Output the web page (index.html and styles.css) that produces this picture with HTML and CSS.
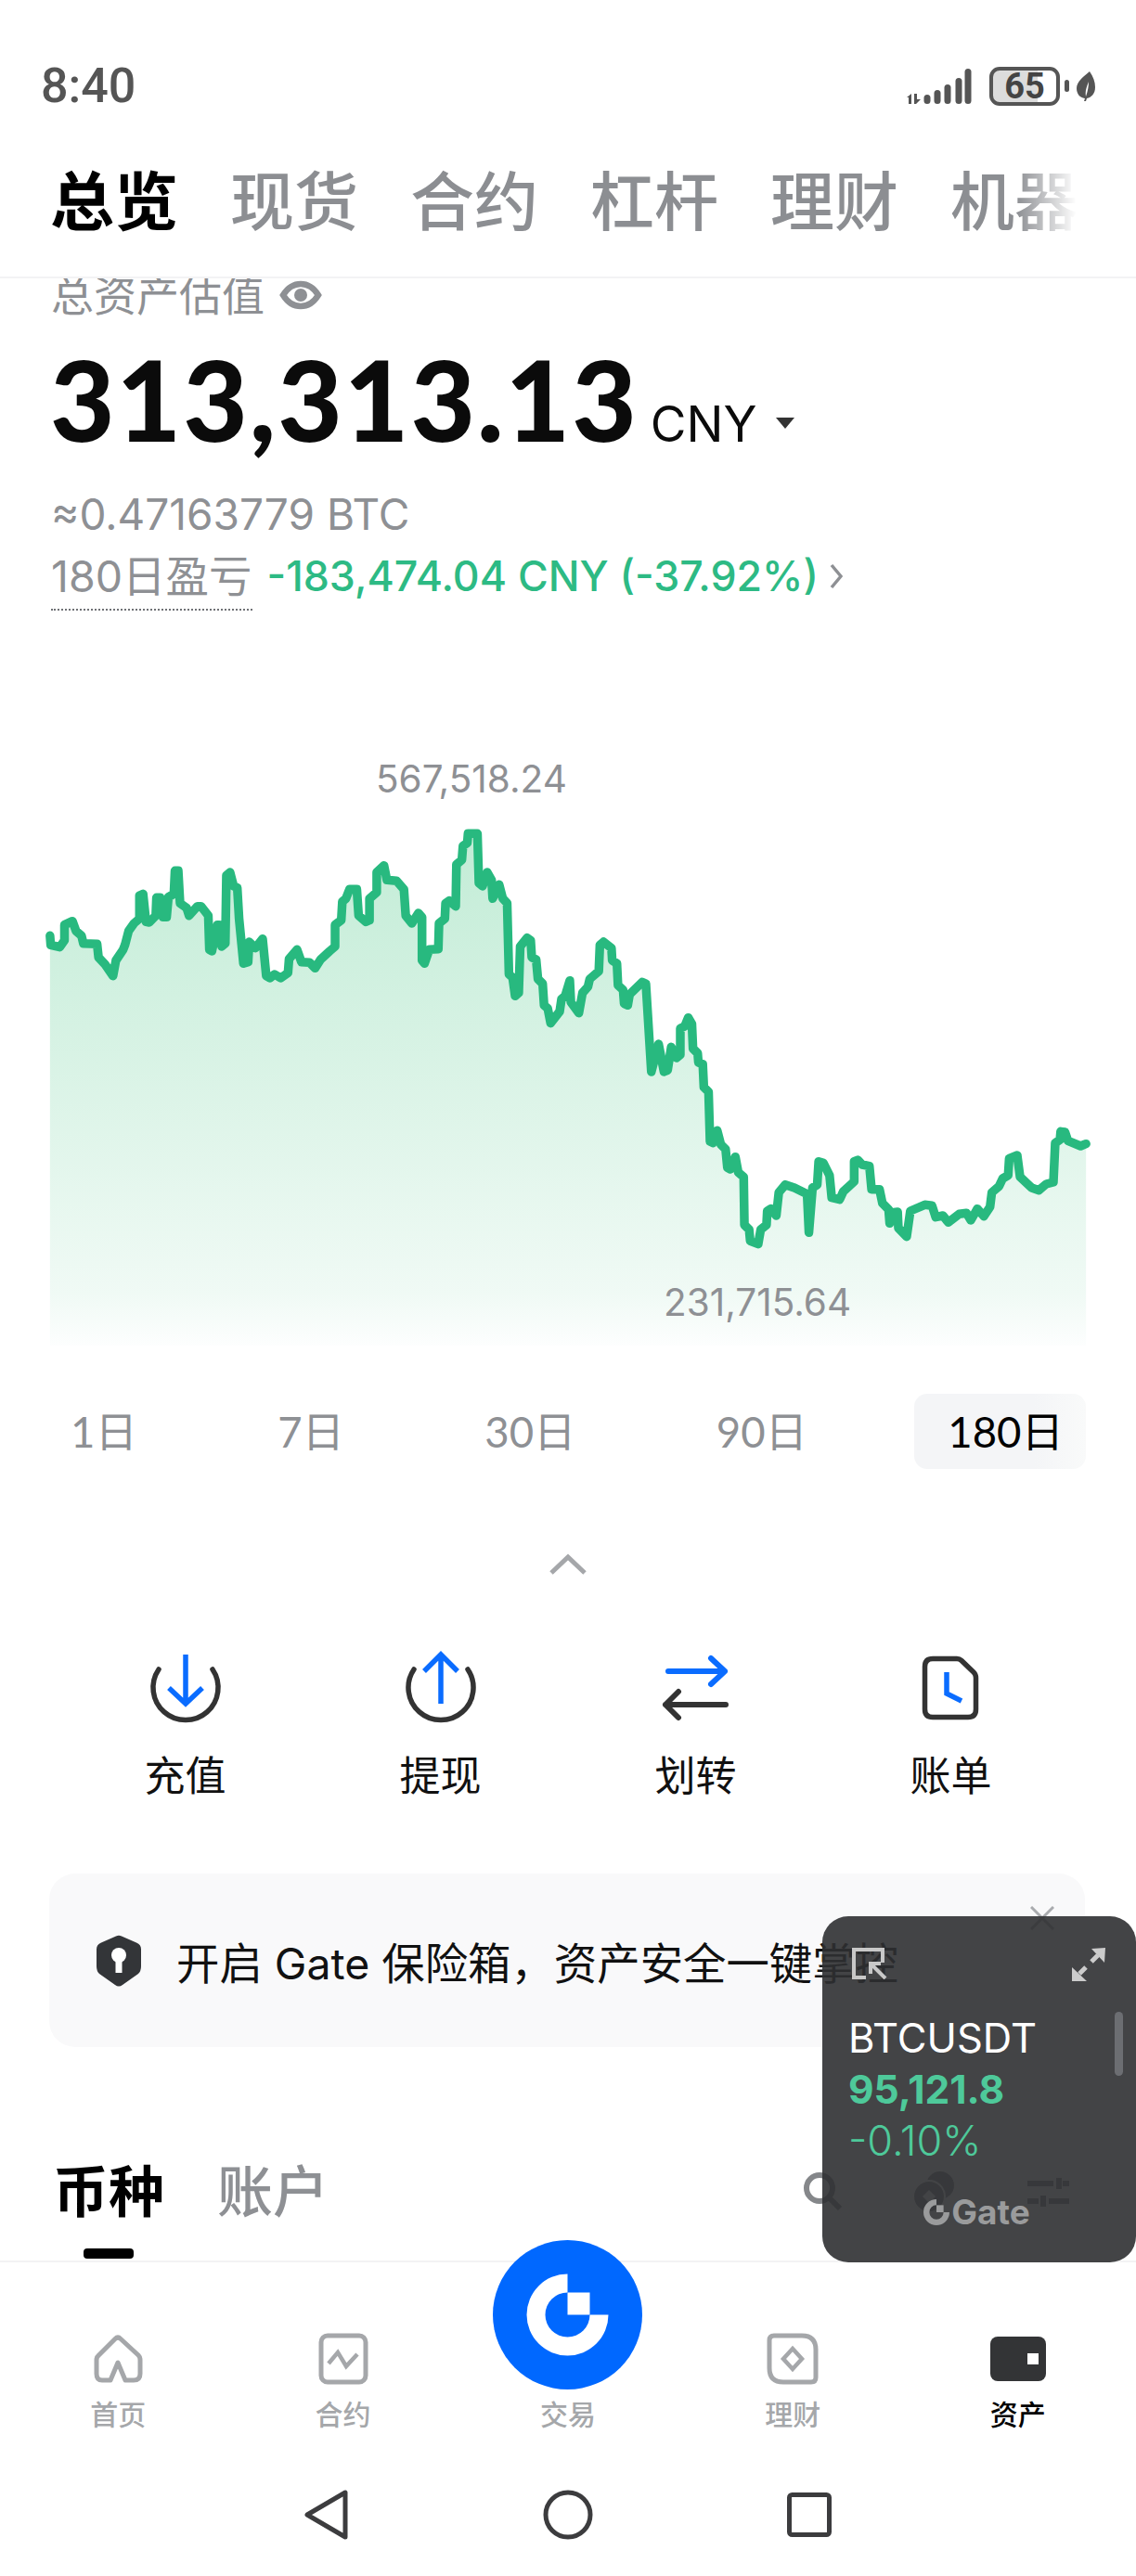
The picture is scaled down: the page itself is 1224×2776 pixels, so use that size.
FILE: index.html
```html
<!DOCTYPE html>
<html lang="zh-CN">
<head>
  <meta charset="UTF-8">
  <meta name="viewport" content="width=device-width, initial-scale=1.0">
  <title>总览</title>
  <link rel="stylesheet" href="styles.css">
</head>
<body>
<div class="app">

  <div class="status">
    <span class="time">8:40</span>
    <div class="status-right">
      <svg class="signal" width="72" height="42" viewBox="0 0 72 42" fill="#555">
        <path d="M5 29v11H2v-7H0zM8 29h3v6h4l-5 5H8z"/>
        <rect x="18.500" y="30" width="7" height="10" rx="3.500"/>
        <rect x="29.500" y="25" width="7" height="15" rx="3.500"/>
        <rect x="40.500" y="19" width="7" height="21" rx="3.500"/>
        <rect x="52.500" y="12" width="7" height="28" rx="3.500"/>
        <rect x="62.500" y="2" width="7" height="38" rx="3.500"/>
      </svg>
      <div class="battery">65</div>
      <svg class="leaf" width="20" height="32" viewBox="0 0 20 32" fill="#555">
        <path d="M14 0C18 6 20 11 20 17c0 7-4 11-9 12l-1 3H8l1-3C3 28 0 24 0 18 0 11 8 5 14 0zM10 27c2-6 3-11 3-16-2 5-4 10-3 16z"/>
      </svg>
    </div>
  </div>

  <div class="tabs">
    <span class="tab tab-on">总览</span>
    <span class="tab">现货</span>
    <span class="tab">合约</span>
    <span class="tab">杠杆</span>
    <span class="tab">理财</span>
    <span class="tab">机器</span>
  </div>

  <div class="content">
    <div class="label">
      总资产估值
      <svg width="46" height="32" viewBox="0 0 46 32" fill="none" stroke="#8e9094" stroke-width="6.500">
        <path d="M4 16C9 8 15 4 23 4s14 4 19 12c-5 8-11 12-19 12S9 24 4 16z"/>
        <circle cx="23" cy="16" r="7" fill="#8e9094" stroke="none"/>
      </svg>
    </div>

    <div class="total">
      <span class="total-num">313,313.13</span>
      <span class="total-cur">CNY</span>
      <span class="caret"></span>
    </div>

    <div class="btc">≈0.47163779 BTC</div>

    <div class="pnl">
      <span class="pnl-label">180日盈亏</span>
      <span class="pnl-val">-183,474.04 CNY (-37.92%)</span>
      <svg width="14" height="28" viewBox="0 0 14 28" fill="none" stroke="#8e9094" stroke-width="3.500"><path d="M2 2l10 12L2 26"/></svg>
    </div>

    <div class="chart">
      <span class="chart-label chart-high">567,518.24</span>
      <span class="chart-label chart-low">231,715.64</span>
      <svg class="chart-svg" width="1224" height="580" viewBox="0 0 3136 1740" preserveAspectRatio="none">
        <defs>
          <linearGradient id="areaFill" gradientUnits="userSpaceOnUse" x1="0" y1="50" x2="0" y2="1710">
            <stop offset="0" stop-color="#c2ecd6"/>
            <stop offset="0.9" stop-color="#f0faf5"/>
            <stop offset="1" stop-color="#fdfefe"/>
          </linearGradient>
        </defs>
        <polygon fill="url(#areaFill)" points="138,1710 138,385 140,415 165,422 178,400 178,350 200,338 210,370 225,385 230,410 268,412 272,455 290,478 312,515 320,465 340,430 345,415 355,370 370,345 385,330 385,255 395,250 403,340 412,342 430,320 432,262 442,262 450,325 460,325 465,260 480,250 483,175 492,175 497,280 515,295 522,320 545,290 555,290 575,320 578,430 585,435 600,350 605,350 612,420 622,410 625,190 635,180 645,225 655,230 660,330 672,475 685,470 688,405 705,425 725,395 735,515 745,522 758,510 775,522 795,505 798,460 820,430 832,470 855,472 870,490 885,462 910,435 925,420 925,350 942,335 945,275 955,265 965,235 985,235 990,320 1010,340 1020,335 1020,265 1040,245 1040,180 1060,158 1068,205 1095,208 1115,235 1120,320 1137,345 1155,312 1165,325 1165,465 1172,475 1185,430 1210,428 1212,345 1228,330 1230,280 1240,272 1258,290 1260,155 1275,140 1278,95 1290,85 1292,55 1318,55 1322,215 1332,225 1345,180 1357,205 1360,265 1378,220 1388,265 1400,280 1405,510 1415,520 1422,580 1432,570 1436,420 1455,392 1465,400 1468,455 1480,462 1485,525 1498,540 1502,610 1512,620 1520,668 1545,630 1550,590 1560,580 1573,530 1576,600 1598,635 1608,570 1623,550 1628,525 1653,500 1656,415 1666,405 1688,425 1690,465 1703,475 1706,545 1720,560 1723,605 1733,610 1738,575 1773,535 1783,540 1798,825 1818,735 1833,825 1843,820 1853,745 1868,780 1878,770 1878,685 1890,678 1900,650 1910,670 1913,750 1926,765 1928,795 1940,800 1943,875 1956,890 1960,1050 1968,1055 1980,1015 1990,1060 2003,1075 2008,1135 2016,1140 2030,1100 2038,1150 2053,1165 2055,1320 2068,1335 2071,1372 2093,1382 2100,1335 2116,1320 2118,1275 2128,1268 2143,1290 2150,1215 2168,1190 2193,1200 2228,1220 2233,1345 2243,1200 2256,1190 2260,1115 2273,1120 2290,1160 2296,1232 2318,1238 2328,1212 2358,1180 2358,1115 2368,1110 2380,1125 2400,1130 2406,1205 2428,1205 2436,1250 2453,1270 2456,1315 2463,1280 2478,1278 2480,1330 2503,1358 2513,1275 2553,1255 2573,1258 2583,1295 2603,1290 2618,1312 2648,1285 2668,1282 2680,1305 2698,1268 2716,1292 2733,1262 2738,1215 2758,1195 2768,1170 2783,1160 2786,1105 2808,1095 2816,1165 2848,1200 2868,1208 2888,1188 2908,1182 2913,1055 2926,1045 2928,1018 2940,1020 2948,1048 2983,1065 2998,1058 2998,1710"/>
        <polyline class="chart-line" points="138,385 140,415 165,422 178,400 178,350 200,338 210,370 225,385 230,410 268,412 272,455 290,478 312,515 320,465 340,430 345,415 355,370 370,345 385,330 385,255 395,250 403,340 412,342 430,320 432,262 442,262 450,325 460,325 465,260 480,250 483,175 492,175 497,280 515,295 522,320 545,290 555,290 575,320 578,430 585,435 600,350 605,350 612,420 622,410 625,190 635,180 645,225 655,230 660,330 672,475 685,470 688,405 705,425 725,395 735,515 745,522 758,510 775,522 795,505 798,460 820,430 832,470 855,472 870,490 885,462 910,435 925,420 925,350 942,335 945,275 955,265 965,235 985,235 990,320 1010,340 1020,335 1020,265 1040,245 1040,180 1060,158 1068,205 1095,208 1115,235 1120,320 1137,345 1155,312 1165,325 1165,465 1172,475 1185,430 1210,428 1212,345 1228,330 1230,280 1240,272 1258,290 1260,155 1275,140 1278,95 1290,85 1292,55 1318,55 1322,215 1332,225 1345,180 1357,205 1360,265 1378,220 1388,265 1400,280 1405,510 1415,520 1422,580 1432,570 1436,420 1455,392 1465,400 1468,455 1480,462 1485,525 1498,540 1502,610 1512,620 1520,668 1545,630 1550,590 1560,580 1573,530 1576,600 1598,635 1608,570 1623,550 1628,525 1653,500 1656,415 1666,405 1688,425 1690,465 1703,475 1706,545 1720,560 1723,605 1733,610 1738,575 1773,535 1783,540 1798,825 1818,735 1833,825 1843,820 1853,745 1868,780 1878,770 1878,685 1890,678 1900,650 1910,670 1913,750 1926,765 1928,795 1940,800 1943,875 1956,890 1960,1050 1968,1055 1980,1015 1990,1060 2003,1075 2008,1135 2016,1140 2030,1100 2038,1150 2053,1165 2055,1320 2068,1335 2071,1372 2093,1382 2100,1335 2116,1320 2118,1275 2128,1268 2143,1290 2150,1215 2168,1190 2193,1200 2228,1220 2233,1345 2243,1200 2256,1190 2260,1115 2273,1120 2290,1160 2296,1232 2318,1238 2328,1212 2358,1180 2358,1115 2368,1110 2380,1125 2400,1130 2406,1205 2428,1205 2436,1250 2453,1270 2456,1315 2463,1280 2478,1278 2480,1330 2503,1358 2513,1275 2553,1255 2573,1258 2583,1295 2603,1290 2618,1312 2648,1285 2668,1282 2680,1305 2698,1268 2716,1292 2733,1262 2738,1215 2758,1195 2768,1170 2783,1160 2786,1105 2808,1095 2816,1165 2848,1200 2868,1208 2888,1188 2908,1182 2913,1055 2926,1045 2928,1018 2940,1020 2948,1048 2983,1065 2998,1058"/>
      </svg>
    </div>

    <div class="ranges">
      <span class="range">1日</span>
      <span class="range">7日</span>
      <span class="range">30日</span>
      <span class="range">90日</span>
      <span class="range range-on">180日</span>
    </div>

    <svg class="fold" width="40" height="23" viewBox="0 0 40 23" fill="none" stroke="#a5a7aa" stroke-width="5"><path d="M2 21L20 4l18 17"/></svg>

    <div class="actions">
      <div class="action">
        <svg width="84" height="84" viewBox="0 0 84 84" fill="none" stroke-width="5.500">
          <path d="M13 23A35 35 0 1 0 71 23" stroke="#333" stroke-linecap="round"/>
          <path d="M42 7V60M24 43l18 17 18-17" stroke="#0a6cff"/>
        </svg>
        <span>充值</span>
      </div>
      <div class="action">
        <svg width="84" height="84" viewBox="0 0 84 84" fill="none" stroke-width="5.500">
          <path d="M13 23A35 35 0 1 0 71 23" stroke="#333" stroke-linecap="round"/>
          <path d="M42 60V7M24 25L42 7l18 18" stroke="#0a6cff"/>
        </svg>
        <span>提现</span>
      </div>
      <div class="action">
        <svg width="84" height="84" viewBox="0 0 84 84" fill="none" stroke-width="6" stroke-linecap="round" stroke-linejoin="round">
          <path d="M12 25H73M58 11l15 14-15 14" stroke="#0a6cff"/>
          <path d="M74 61H9M23 47L9 61l14 14" stroke="#333"/>
        </svg>
        <span>划转</span>
      </div>
      <div class="action">
        <svg width="84" height="84" viewBox="0 0 84 84" fill="none" stroke-width="5.500">
          <path d="M22 11.500h26q3 0 5 2L66 26q2.500 2.500 2.500 6v34q0 8.500-8.500 8.500H22q-8.500 0-8.500-8.500V20q0-8.500 8.500-8.500z" stroke="#333"/>
          <path d="M37 26V49l16 8" stroke="#0a6cff"/>
        </svg>
        <span>账单</span>
      </div>
    </div>

    <div class="banner">
      <svg width="48" height="56" viewBox="0 0 48 56">
        <path fill="#333538" d="M21 1.500q3-1.500 6 0l16 7q5 2 5 7V34q0 5-3 8L28 54q-4 3-8 0L3 42q-3-3-3-8V15.500q0-5 5-7z"/>
        <circle cx="24" cy="22" r="8" fill="#fff"/>
        <rect x="20.500" y="24" width="7" height="17" fill="#fff"/>
      </svg>
      <span class="banner-text">开启 Gate 保险箱，资产安全一键掌控</span>
      <svg class="banner-close" width="26" height="26" viewBox="0 0 26 26" stroke="#a9abae" stroke-width="3"><path d="M1 1l24 24M25 1L1 25"/></svg>
    </div>

    <div class="assets">
      <div class="assets-tabs">
        <div class="assets-tab assets-tab-on">币种<i class="assets-bar"></i></div>
        <div class="assets-tab">账户</div>
      </div>
      <div class="assets-tools">
        <svg width="42" height="42" viewBox="0 0 42 42" fill="none" stroke="#85878a" stroke-width="6"><circle cx="18" cy="18" r="14"/><path d="M28 28l12 12"/></svg>
        <svg width="44" height="44" viewBox="0 0 44 44">
          <circle cx="28" cy="15" r="15" fill="#85878a"/>
          <circle cx="16" cy="27" r="17" fill="#85878a" stroke="#fff" stroke-width="2"/>
          <path d="M16 20l7 7-7 7-7-7z" fill="#fff"/>
        </svg>
        <svg width="45" height="32" viewBox="0 0 45 32" fill="#85878a">
          <rect y="3" width="28" height="6"/><rect x="31" width="6" height="12"/><rect x="38" y="3" width="7" height="6"/>
          <rect y="22" width="12" height="6"/><rect x="14" y="19" width="6" height="12"/><rect x="23" y="22" width="22" height="6"/>
        </svg>
      </div>
    </div>
  </div>

  <div class="nav">
    <div class="nav-items">
      <div class="nav-item">
        <svg width="56" height="56" viewBox="0 0 56 56" fill="none" stroke="#a5a7aa" stroke-width="5" stroke-linejoin="round">
          <path d="M7.500 24L25 6.500q3-3 6 0L50 24q2 2 2 5V44q0 7-7 7H36L28 32l-8 19H11q-6 0-6-7V29q0-3 2.500-5z"/>
        </svg>
        <span>首页</span>
      </div>
      <div class="nav-item">
        <svg width="56" height="56" viewBox="0 0 56 56" fill="none" stroke="#a5a7aa" stroke-width="5">
          <rect x="4" y="3" width="48" height="50" rx="7"/>
          <path d="M12 33l10-12 9 15 12-13" stroke-width="4.500"/>
        </svg>
        <span>合约</span>
      </div>
      <div class="nav-item nav-trade">
        <svg class="trade-btn" width="161" height="161" viewBox="0 0 161 161">
          <circle cx="80.500" cy="80.500" r="80.500" fill="#0068ff"/>
          <path fill="#fff" d="M80.500 36.500a44 44 0 1 0 44 44h-20a24 24 0 1 1-24-24z"/>
          <rect x="80.500" y="56.500" width="24" height="24" fill="#fff"/>
        </svg>
        <span>交易</span>
      </div>
      <div class="nav-item">
        <svg width="56" height="56" viewBox="0 0 56 56" fill="none" stroke="#a5a7aa" stroke-width="5">
          <path d="M8 3H38q15 0 15 15V48q0 5-5 5H18Q3 53 3 38V8q0-5 5-5z"/>
          <path d="M28 17l10 11-10 11-10-11z" stroke-width="4.500"/>
        </svg>
        <span>理财</span>
      </div>
      <div class="nav-item nav-on">
        <svg width="60" height="56" viewBox="0 0 60 56">
          <rect y="4" width="60" height="48" rx="8" fill="#333436"/>
          <rect x="40" y="22" width="12" height="12" fill="#fff"/>
        </svg>
        <span>资产</span>
      </div>
    </div>
    <div class="sysbar">
      <svg width="48" height="54" viewBox="0 0 48 54" fill="none" stroke="#3c3c3e" stroke-width="5" stroke-linejoin="round"><path d="M44 3V51L3 27z"/></svg>
      <svg width="54" height="54" viewBox="0 0 54 54" fill="none" stroke="#3c3c3e" stroke-width="5"><circle cx="27" cy="27" r="24"/></svg>
      <svg width="48" height="48" viewBox="0 0 48 48" fill="none" stroke="#3c3c3e" stroke-width="5"><rect x="2.500" y="2.500" width="43" height="43" rx="3"/></svg>
    </div>
  </div>

  <div class="floater">
    <div class="floater-top">
      <svg width="38" height="34" viewBox="0 0 38 34" fill="none" stroke="#c8c8c8" stroke-width="4">
        <path d="M15 32H2V2H33V16"/>
        <path d="M36 33L20 17M20 28V17H31"/>
      </svg>
      <svg width="36" height="36" viewBox="0 0 36 36" fill="#ccc">
        <path d="M21 1L36 0l-1 16zM0 21v15h16z"/>
        <path d="M8 28l7-7M21 15l7-7" stroke="#ccc" stroke-width="5"/>
      </svg>
    </div>
    <div class="floater-pair">BTCUSDT</div>
    <div class="floater-price">95,121.8</div>
    <div class="floater-pct">-0.10%</div>
    <div class="floater-logo">
      <svg width="28" height="28" viewBox="0 0 88 88">
        <path fill="#9a9b9c" d="M44 0a44 44 0 1 0 44 44H68a24 24 0 1 1-24-24z"/>
        <rect x="44" y="20" width="24" height="24" fill="#9a9b9c"/>
      </svg>
      <span>Gate</span>
    </div>
    <div class="floater-scroll"></div>
  </div>

</div>
</body>
</html>
```

FILE: styles.css
```css
* {
  box-sizing: border-box;
}
body {
  margin: 0;
  background-color: #fff;
  font-family: Inter, "Noto Sans CJK SC", sans-serif;
}
svg {
  display: block;
  flex: none;
}

.app {
  position: relative;
  width: 1224px;
  height: 2776px;
  overflow: hidden;
}

/* status bar */
.status {
  display: flex;
  justify-content: space-between;
  align-items: center;
  height: 120px;
  padding: 65px 44px 0 44px;
}
.time {
  font-family: Roboto, sans-serif;
  font-size: 52px;
  font-weight: 500;
  line-height: 55px;
  color: #555;
}
.status-right {
  display: flex;
  align-items: center;
}
.signal {
  margin-right: 17px;
}
.battery {
  position: relative;
  width: 76px;
  height: 42px;
  border: 4px solid #555;
  border-radius: 11px;
  background: linear-gradient(90deg, #dcdcdc 70%, #fff 70%);
  font-family: Roboto, sans-serif;
  font-size: 38px;
  font-weight: 700;
  line-height: 34px;
  text-align: center;
  color: #444;
}
.battery::after {
  content: "";
  position: absolute;
  right: -14px;
  top: 10px;
  width: 5px;
  height: 13px;
  border-radius: 3px;
  background-color: #555;
}
.leaf {
  margin-left: 18px;
}

/* top tabs */
.tabs {
  display: flex;
  gap: 56px;
  width: 1160px;
  height: 178px;
  padding: 64px 0 0 54px;
  overflow: hidden;
  font-size: 69px;
  line-height: 68px;
  font-weight: 500;
  color: #8c8e92;
  -webkit-mask-image: linear-gradient(90deg, #000 1095px, transparent 1160px);
  mask-image: linear-gradient(90deg, #000 1095px, transparent 1160px);
}
.tab {
  flex: none;
}
.tab-on {
  font-weight: 700;
  color: #000;
}

.content {
  height: 2138px;
  border-top: 2px solid #f3f3f4;
  overflow: hidden;
}

/* balance */
.label {
  display: flex;
  align-items: center;
  gap: 16px;
  margin-top: -5px;
  padding-left: 55px;
  font-size: 46px;
  line-height: 46px;
  color: #8e9094;
}
.total {
  display: flex;
  align-items: baseline;
  height: 120px;
  margin-top: 29px;
  padding-left: 54px;
  color: #0b0b0b;
}
.total-num {
  font-family: Lato, sans-serif;
  font-size: 120px;
  font-weight: 900;
  line-height: 120px;
  letter-spacing: 2px;
}
.total-cur {
  margin-left: 13px;
  font-size: 53px;
}
.caret {
  width: 0;
  height: 0;
  margin-left: 21px;
  border-left: 10px solid transparent;
  border-right: 10px solid transparent;
  border-top: 12px solid #333;
  position: relative;
  top: -14px;
}
.btc {
  margin-top: 39px;
  padding-left: 55px;
  font-size: 46px;
  line-height: 50px;
  color: #8e9094;
}
.pnl {
  display: flex;
  align-items: center;
  margin-top: 17px;
  padding-left: 55px;
  line-height: 50px;
}
.pnl-label {
  position: relative;
  font-size: 46.500px;
  color: #8e9094;
}
.pnl-label::after {
  content: "";
  position: absolute;
  left: 0;
  right: 0;
  bottom: -12px;
  border-bottom: 2px dotted #6f7175;
}
.pnl-val {
  margin-left: 16px;
  font-size: 44.700px;
  font-weight: 500;
  color: #2dba84;
}
.pnl svg {
  margin-left: 12px;
}

/* chart */
.chart {
  position: relative;
  margin-top: 234px;
  height: 580px;
}
.chart-label {
  position: absolute;
  font-size: 40.500px;
  line-height: 48px;
  color: #8e9094;
}
.chart-high {
  left: 405px;
  top: -64px;
}
.chart-low {
  left: 715px;
  top: 500px;
}
.chart-line {
  fill: none;
  stroke: #28b97f;
  stroke-width: 9.500px;
  stroke-linejoin: round;
  stroke-linecap: round;
  vector-effect: non-scaling-stroke;
}

.ranges {
  display: flex;
  justify-content: space-between;
  margin: 42px 54px 0 40px;
  height: 81px;
}
.range {
  padding: 0 36px;
  font-family: Lato, "Noto Sans CJK SC", sans-serif;
  font-size: 45.500px;
  line-height: 81px;
  color: #8e9094;
}
.range-on {
  padding: 0 24px 0 36px;
  border-radius: 14px;
  background: linear-gradient(90deg, #f4f5f7 70%, #f9fafa);
  color: #000;
}
.fold {
  margin: 91px auto 0;
}

/* actions */
.actions {
  display: grid;
  grid-template-columns: repeat(4, 275px);
  margin-top: 79px;
  padding-left: 62px;
}
.action {
  display: flex;
  flex-direction: column;
  align-items: center;
  gap: 33px;
  font-size: 44px;
  line-height: 42px;
  color: #111;
}

/* banner */
.banner {
  position: relative;
  display: flex;
  align-items: center;
  gap: 38px;
  width: 1116px;
  height: 187px;
  margin: 84px 0 0 53px;
  padding-left: 51px;
  border-radius: 28px;
  background-color: #f9f9fa;
  font-size: 46.400px;
  color: #111;
  white-space: nowrap;
}
.banner-close {
  position: absolute;
  right: 33px;
  top: 35px;
}

/* assets tabs */
.assets {
  display: flex;
  justify-content: space-between;
  margin-top: 125px;
  padding: 0 72px 0 57px;
}
.assets-tabs {
  display: flex;
  gap: 57px;
}
.assets-tab {
  font-size: 60px;
  line-height: 62px;
  font-weight: 500;
  color: #8e9094;
}
.assets-tab-on {
  font-weight: 700;
  color: #000;
}
.assets-bar {
  display: block;
  width: 54px;
  height: 11px;
  margin: 30px auto 0;
  border-radius: 4px;
  background-color: #000;
}
.assets-tools {
  display: flex;
  align-items: flex-start;
  gap: 78px;
  margin-top: 9px;
}
.assets-tools svg:last-child {
  margin-top: 7px;
}

/* bottom nav */
.nav {
  border-top: 2px solid #f3f3f4;
}
.nav-items {
  display: grid;
  grid-template-columns: repeat(5, 242.4px);
  padding: 76px 0 0 6px;
}
.nav-item {
  position: relative;
  display: flex;
  flex-direction: column;
  align-items: center;
  justify-content: flex-end;
  gap: 17px;
  font-size: 30px;
  line-height: 30px;
  font-weight: 500;
  color: #a5a7aa;
}
.nav-on {
  color: #000;
}
.trade-btn {
  position: absolute;
  left: 40px;
  top: -100px;
}
.sysbar {
  display: grid;
  grid-template-columns: repeat(3, 260px);
  justify-content: center;
  justify-items: center;
  align-items: center;
  margin-top: 66px;
}

/* floating ticker */
.floater {
  position: absolute;
  left: 886px;
  top: 2065px;
  width: 338px;
  height: 373px;
  padding: 34px 33px 0 28px;
  border-radius: 28px;
  background-color: rgba(47, 48, 50, 0.9);
  font-size: 43.500px;
  line-height: 55px;
}
.floater-top {
  display: flex;
  justify-content: space-between;
  height: 36px;
  margin-bottom: 34px;
  padding-left: 4px;
}
.floater-pair {
  color: #fff;
}
.floater-price {
  font-weight: 700;
  font-size: 42.500px;
  color: #4ec99a;
}
.floater-pct {
  font-size: 45px;
  font-weight: 300;
  color: #4ec99a;
}
.floater-logo {
  display: flex;
  align-items: center;
  justify-content: center;
  gap: 2px;
  margin-top: 34px;
  font-size: 37px;
  line-height: 32px;
  font-weight: 700;
  color: #9a9b9c;
}
.floater-scroll {
  position: absolute;
  right: 14px;
  top: 103px;
  width: 9px;
  height: 69px;
  border-radius: 5px;
  background-color: #6c6e72;
}
```
